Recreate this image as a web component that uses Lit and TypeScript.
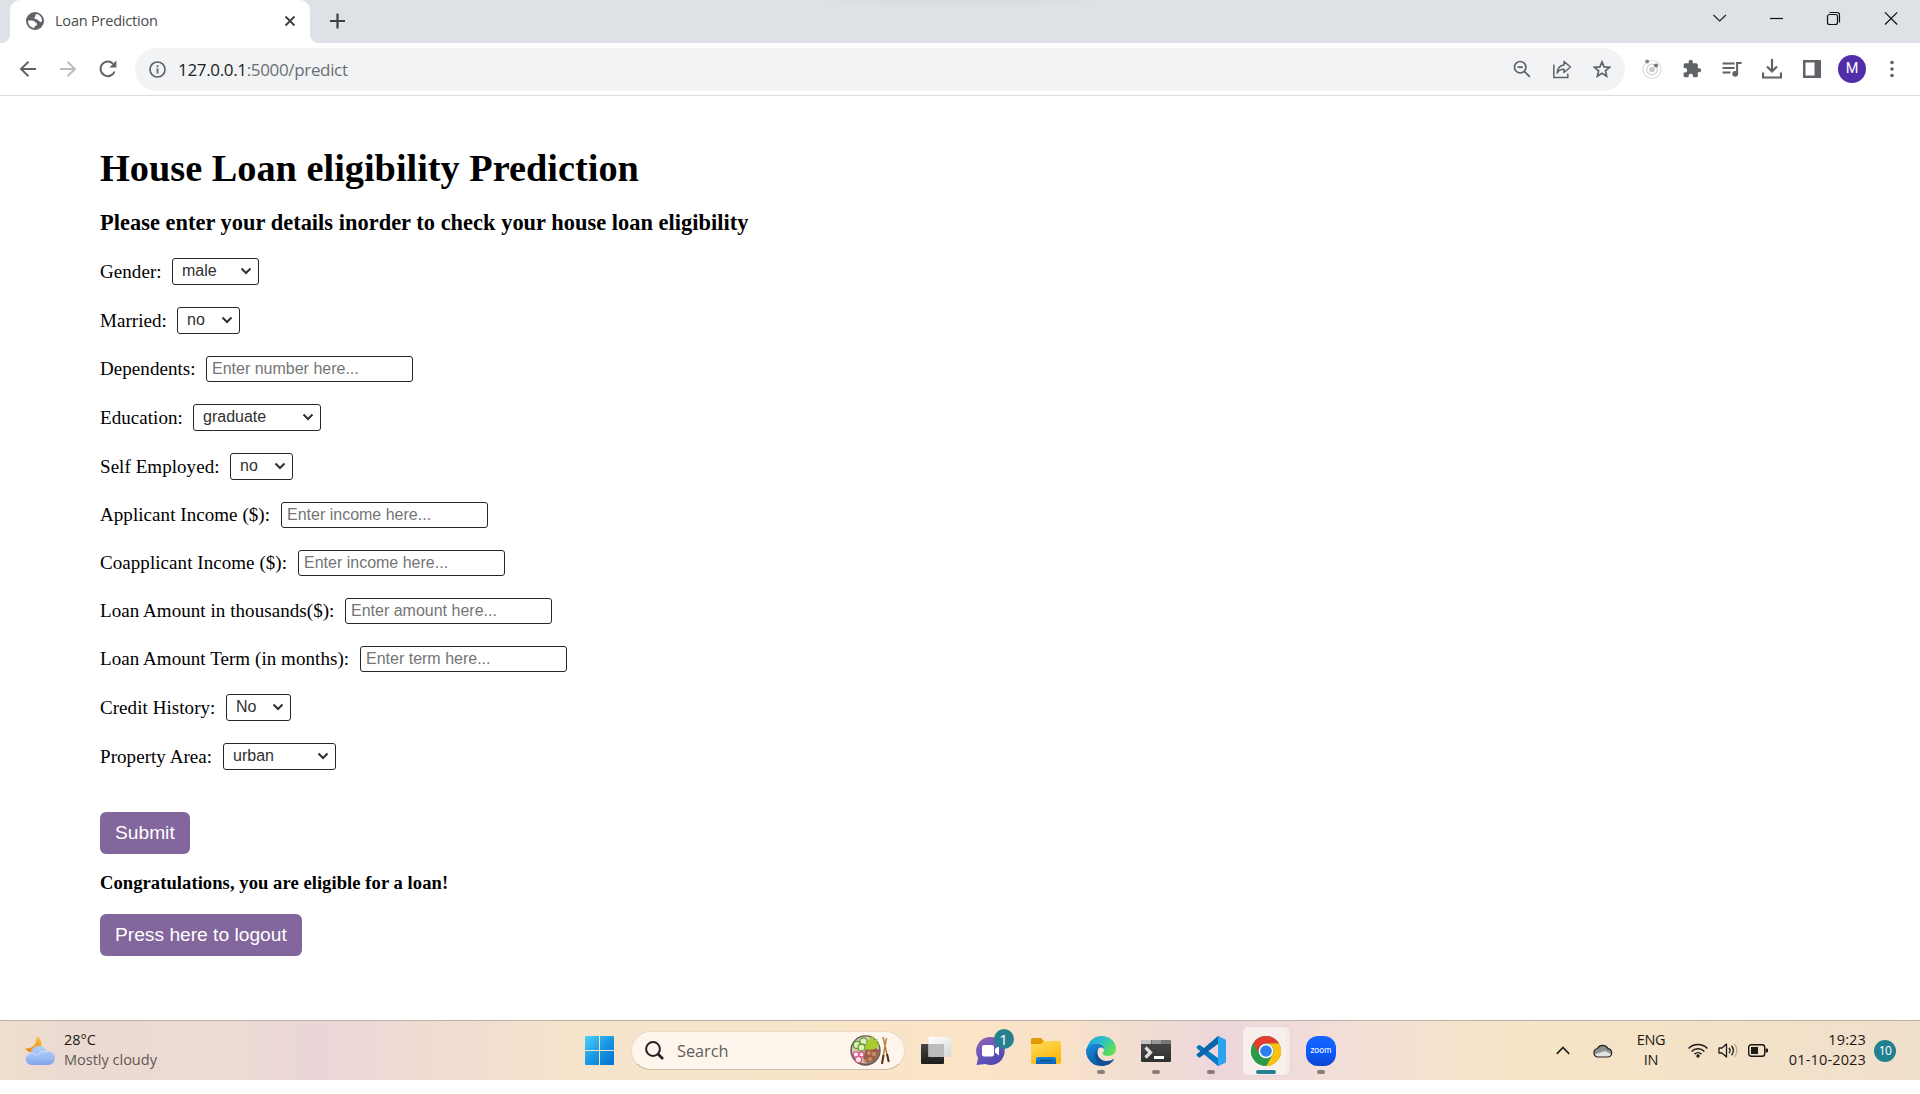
import { LitElement, html, css, svg } from "lit";
import { customElement, property } from "lit/decorators.js";

interface Field {
  label: string;
  kind: "select" | "input";
  value: string;
  labelWidth: number;
  width: number;
}

const FIELDS: Field[] = [
  { label: "Gender:", kind: "select", value: "male", labelWidth: 72, width: 87 },
  { label: "Married:", kind: "select", value: "no", labelWidth: 77, width: 63 },
  { label: "Dependents:", kind: "input", value: "Enter number here...", labelWidth: 106, width: 207 },
  { label: "Education:", kind: "select", value: "graduate", labelWidth: 93, width: 128 },
  { label: "Self Employed:", kind: "select", value: "no", labelWidth: 130, width: 63 },
  { label: "Applicant Income ($):", kind: "input", value: "Enter income here...", labelWidth: 181, width: 207 },
  { label: "Coapplicant Income ($):", kind: "input", value: "Enter income here...", labelWidth: 198, width: 207 },
  { label: "Loan Amount in thousands($):", kind: "input", value: "Enter amount here...", labelWidth: 245, width: 207 },
  { label: "Loan Amount Term (in months):", kind: "input", value: "Enter term here...", labelWidth: 260, width: 207 },
  { label: "Credit History:", kind: "select", value: "No", labelWidth: 126, width: 65 },
  { label: "Property Area:", kind: "select", value: "urban", labelWidth: 123, width: 113 },
];

@customElement("browser-chrome")
export class BrowserChrome extends LitElement {
  static styles = css`
    :host { display: block; font-family: "Open Sans", "Noto Sans", sans-serif; }
    svg { display: block; }
    .tabs {
      height: 43px; display: flex; align-items: flex-start; padding-left: 2px;
      background: radial-gradient(ellipse 150px 8px at 960px 0, #d8dbe0 0, #dadde2 60%, #dee1e6 100%) #dee1e6;
    }
    .curve { width: 8px; height: 43px; }
    .curve.l { background: radial-gradient(circle at 0 0, transparent 7.5px, #fff 8px) 0 35px / 8px 8px no-repeat; }
    .curve.r { background: radial-gradient(circle at 100% 0, transparent 7.5px, #fff 8px) 0 35px / 8px 8px no-repeat; }
    .tab {
      width: 300px; height: 43px; box-sizing: border-box; background: #fff;
      border-radius: 10px 10px 0 0; display: flex; align-items: center;
      padding: 0 14px 2px 16px;
    }
    .title { flex: 1; margin-left: 11px; font-size: 14.5px; letter-spacing: -0.2px; color: #45494d; white-space: nowrap; }
    .plus { margin: 12px 0 0 10px; }
    .window { margin-left: auto; display: flex; height: 36px; align-items: center; }
    .window svg { width: 57.3px; height: 16px; }
    .toolbar { height: 52px; display: flex; align-items: center; border-bottom: 1px solid #dadce0; background: #fff; padding-left: 7.5px; }
    .nav { width: 40px; display: flex; justify-content: center; flex: none; }
    .omni {
      width: 1490px; height: 43px; border-radius: 22px; background: #f1f3f4; margin-left: 7.5px;
      display: flex; align-items: center; box-sizing: border-box; padding: 0 3px 0 14px;
    }
    .url { flex: 1; margin-left: 12px; font-size: 17px; letter-spacing: -0.34px; color: #6b6f73; white-space: nowrap; }
    .host { color: #202124; }
    .ext { display: flex; margin-left: 7px; align-items: center; }
    .avatar { width: 28px; height: 28px; border-radius: 50%; background: #512da8; color: #fff; font: 14.5px/28px Roboto, sans-serif; text-align: center; }
  `;

  render() {
    return html`
      <div class="tabs">
        <div class="curve l"></div>
        <div class="tab">
          <svg width="18" height="18" viewBox="0 0 18 18">
            <circle cx="9" cy="9" r="9" fill="#5f6368" />
            <path d="M10 2C13.200 2.200 16 5 16 9l-1.200 1.200-2.300-1.400c-.6-1.600-1.700-1.700-3.200-1.900C8 6.600 8 5.200 9.200 4.600z" fill="#fff" />
            <path d="M2 8.500h3.800c2.200 0 3 .7 3.500 2 1.500.2 1.900.9 1.700 2-.2 1-.9 1.400-2.200 1.500L8.300 16C4.800 15.800 2 12.800 2 8.500z" fill="#fff" />
          </svg>
          <span class="title">Loan Prediction</span>
          <svg width="12" height="12" viewBox="0 0 12 12"><path d="M1.500 1.500l9 9M10.500 1.500l-9 9" stroke="#3c4043" stroke-width="1.800" /></svg>
        </div>
        <div class="curve r"></div>
        <svg class="plus" width="18" height="18" viewBox="0 0 18 18"><path d="M9.500 1.500v15M2 9h15" stroke="#3c4043" stroke-width="2.200" /></svg>
        <div class="window">
          <svg viewBox="0 0 57.3 16"><path d="M22.500 5l6.200 6 6.200-6" fill="none" stroke="#222" stroke-width="1.200" /></svg>
          <svg viewBox="0 0 57.3 16"><path d="M22 8.500h13" stroke="#111" stroke-width="1.200" /></svg>
          <svg viewBox="0 0 57.3 16">
            <rect x="22.500" y="4.500" width="10" height="10" rx="2" fill="none" stroke="#111" stroke-width="1.200" />
            <path d="M24.500 2.500h7.500a2.500 2.500 0 0 1 2.500 2.500v7.500" fill="none" stroke="#111" stroke-width="1.200" />
          </svg>
          <svg viewBox="0 0 57.3 16"><path d="M22 2.300l12.200 12.200M34.200 2.300L22 14.500" stroke="#111" stroke-width="1.200" /></svg>
        </div>
      </div>
      <div class="toolbar">
        <div class="nav"><svg width="18" height="18" viewBox="0 0 18 18"><path d="M17 9H2M9.500 1.700L2 9l7.500 7.300" fill="none" stroke="#5f6368" stroke-width="1.900" /></svg></div>
        <div class="nav"><svg width="18" height="18" viewBox="0 0 18 18"><path d="M1 9h15M8.500 1.700L16 9l-7.500 7.300" fill="none" stroke="#babcbe" stroke-width="1.900" /></svg></div>
        <div class="nav"><svg width="20" height="20" viewBox="0 0 20 20"><path d="M16.600 12.500A7.300 7.300 0 1 1 15 4.700" fill="none" stroke="#5f6368" stroke-width="2" /><path d="M18.400 1.500v7h-7z" fill="#5f6368" /></svg></div>
        <div class="omni">
          <svg width="17" height="17" viewBox="0 0 17 17"><circle cx="8.500" cy="8.500" r="7.500" fill="none" stroke="#5f6368" stroke-width="1.700" /><path d="M8.500 7.600v5M8.500 4.200v2" stroke="#5f6368" stroke-width="1.800" /></svg>
          <span class="url"><span class="host">127.0.0.1</span>:5000/predict</span>
          <div class="nav"><svg width="18" height="18" viewBox="0 0 18 18"><circle cx="7.200" cy="7.200" r="5.700" fill="none" stroke="#5f6368" stroke-width="1.700" /><path d="M4.500 7.200h5.400M11.300 11.300l5.500 5.500" stroke="#5f6368" stroke-width="1.800" /></svg></div>
          <div class="nav"><svg width="20" height="20" viewBox="0 0 20 20"><path d="M1.800 5.500v13h14v-4" fill="none" stroke="#5f6368" stroke-width="1.500" /><path d="M12 2.500l6.500 5.500-6.500 5.500v-3.200c-3.500 0-5.500 1.200-7 3.700.5-4.500 2.800-7.500 7-8z" fill="none" stroke="#5f6368" stroke-width="1.500" stroke-linejoin="round" /></svg></div>
          <div class="nav"><svg width="18" height="18" viewBox="0 0 18 18"><path d="M9 1.900l2.100 5 5.400.45-4.100 3.550 1.250 5.300L9 13.350 4.350 16.200 5.600 10.900 1.500 7.350l5.400-.45z" fill="none" stroke="#5f6368" stroke-width="1.700" /></svg></div>
        </div>
        <div class="ext">
          <div class="nav"><svg width="20" height="22" viewBox="0 0 20 22">
            <circle cx="10" cy="11.500" r="9" fill="none" stroke="#dcdcdc" stroke-width="1.200" /><circle cx="10" cy="11.500" r="5.300" fill="none" stroke="#d2d2d2" stroke-width="1.200" />
            <circle cx="10" cy="11.500" r="2.800" fill="#c8c8c8" /><circle cx="5.200" cy="3.500" r="2" fill="#858585" /><circle cx="14" cy="7.500" r="2.100" fill="#777" />
          </svg></div>
          <div class="nav"><svg width="20" height="20" viewBox="0 0 24 24"><path fill="#5f6368" d="M20.500 11H19V7c0-1.100-.9-2-2-2h-4V3.500a2.500 2.500 0 0 0-5 0V5H4c-1.100 0-2 .9-2 2v3.800h1.500a2.700 2.700 0 0 1 0 5.400H2V20c0 1.100.9 2 2 2h3.800v-1.500a2.700 2.700 0 0 1 5.400 0V22H17c1.100 0 2-.9 2-2v-4h1.500a2.500 2.500 0 0 0 0-5z" /></svg></div>
          <div class="nav"><svg width="20" height="17" viewBox="0 0 20 17"><path d="M.5 2.500h12M.5 7h12M.5 11.500h8" stroke="#5f6368" stroke-width="2" /><circle cx="13.200" cy="12.800" r="2.900" fill="#5f6368" /><path d="M15.100 13V2h4.500" fill="none" stroke="#5f6368" stroke-width="2" /></svg></div>
          <div class="nav"><svg width="20" height="20" viewBox="0 0 20 20"><path d="M10 0v11.500M5 7.500l5 5 5-5" fill="none" stroke="#5f6368" stroke-width="2.200" /><path d="M1 13.500v5h18v-5" fill="none" stroke="#5f6368" stroke-width="2.200" /></svg></div>
          <div class="nav"><svg width="18" height="18" viewBox="0 0 18 18"><path d="M0 0h18v18H0zM2.500 2.500v13h9v-13z" fill="#5f6368" fill-rule="evenodd" /></svg></div>
          <div class="nav"><div class="avatar">M</div></div>
          <div class="nav"><svg width="4" height="18" viewBox="0 0 4 18"><g fill="#5f6368"><circle cx="2" cy="2.500" r="1.800" /><circle cx="2" cy="9" r="1.800" /><circle cx="2" cy="15.500" r="1.800" /></g></svg></div>
        </div>
      </div>
    `;
  }
}

@customElement("form-field")
export class FormField extends LitElement {
  static styles = css`
    :host { display: block; }
    .row { display: flex; align-items: center; font: 19px/21px "Liberation Serif", serif; letter-spacing: 0.06px; color: #000; }
    .label { white-space: nowrap; flex: none; }
    .label.input { padding-bottom: 1px; }
    .control {
      box-sizing: border-box; height: 27px; border: 1.250px solid #262626; border-radius: 3px; background: #fff;
      font: 16px/18px "Liberation Sans", sans-serif; margin: 0; color: #303030;
    }
    .wrap { display: grid; align-items: center; }
    .wrap > * { grid-area: 1 / 1; }
    select.control { appearance: none; width: 100%; padding: 0 0 1px 9px; }
    .arrow { justify-self: end; margin: 0 7px 1px 0; pointer-events: none; }
    input.control { height: 26px; padding: 0 0 1px 5px; outline: none; }
    input::placeholder { color: #757575; opacity: 1; }
  `;
  @property({ attribute: false }) field!: Field;

  render() {
    const f = this.field;
    return html`<div class="row">
      <label class="label ${f.kind}" style="width:${f.labelWidth}px">${f.label}</label>
      ${f.kind === "select"
        ? html`<div class="wrap" style="width:${f.width}px">
            <select class="control"><option>${f.value}</option></select>
            <svg class="arrow" width="12" height="8" viewBox="0 0 12 8"><path d="M1.500 1.500L6 6l4.500-4.500" fill="none" stroke="#303030" stroke-width="2" /></svg>
          </div>`
        : html`<input class="control" style="width:${f.width}px" placeholder=${f.value} />`}
    </div>`;
  }
}

@customElement("loan-page")
export class LoanPage extends LitElement {
  static styles = css`
    :host { display: block; height: 924px; box-sizing: border-box; padding: 50px 100px 0; font-family: "Liberation Serif", serif; color: #000; background: #fff; }
    h1, h3, h4 { margin: 0; white-space: nowrap; }
    h1 { font-size: 38.320px; line-height: 44px; }
    h3 { font-size: 22.400px; line-height: 26px; margin-top: 20px; letter-spacing: 0.03px; }
    h4 { font-size: 18.600px; line-height: 22px; margin: 18px 0 20px; letter-spacing: 0.05px; }
    .form { display: flex; flex-direction: column; gap: 22px; margin-top: 22px; margin-bottom: 42px; }
    .form form-field:nth-child(3) { margin-top: 0; }
    .btn {
      display: block; height: 42px; border: 0; border-radius: 6px; background: #82669c; color: #fff;
      font: 19.200px "Liberation Sans", sans-serif; padding: 0 15px;
    }
  `;
  render() {
    return html`
      <h1>House Loan eligibility Prediction</h1>
      <h3>Please enter your details inorder to check your house loan eligibility</h3>
      <div class="form">${FIELDS.map((f) => html`<form-field .field=${f}></form-field>`)}</div>
      <button class="btn">Submit</button>
      <h4>Congratulations, you are eligible for a loan!</h4>
      <button class="btn">Press here to logout</button>
    `;
  }
}

const taskIcons = {
  taskview: svg`
    <linearGradient id="tv1" x2="0" y2="1"><stop stop-color="#454545" /><stop offset="1" stop-color="#1c1c1c" /></linearGradient>
    <linearGradient id="tv2" x2="0.700" y2="1"><stop stop-color="#fff" /><stop offset="1" stop-color="#dcdcdc" /></linearGradient>
    <rect x="0" y="8" width="23" height="20" rx="1" fill="url(#tv1)" /><rect x="7.500" y="1" width="22.500" height="20" rx="1" fill="url(#tv2)" />
    <rect x="7.500" y="8" width="15.500" height="13" fill="#bcbcbc" />`,
  chat: svg`
    <linearGradient id="ch1" x2="0.600" y2="1"><stop stop-color="#9a5fa8" /><stop offset="0.500" stop-color="#6a5ac0" /><stop offset="1" stop-color="#5048ae" /></linearGradient>
    <path d="M14.500 1a14 14 0 1 1-5 27L.5 29l1.600-7A14 14 0 0 1 14.500 1z" fill="url(#ch1)" />
    <rect x="6" y="9" width="12" height="11.500" rx="2" fill="#fff" /><path d="M19 13l4-3v9.500l-4-3z" fill="#fff" />`,
  folder: svg`
    <linearGradient id="fo1" x2="0.500" y2="1"><stop stop-color="#ffdc5e" /><stop offset="1" stop-color="#fbb90d" /></linearGradient>
    <linearGradient id="fo2" x2="0" y2="1"><stop stop-color="#1383d8" /><stop offset="1" stop-color="#0c63b5" /></linearGradient>
    <path d="M0 3.500A1.500 1.500 0 0 1 1.500 2H10l3 3v3H0z" fill="#e09a05" />
    <path d="M0 8h10l3-3h15.500A1.500 1.500 0 0 1 30 6.500V26a2 2 0 0 1-2 2H2a2 2 0 0 1-2-2z" fill="url(#fo1)" />
    <path d="M5 28v-5a2 2 0 0 1 2-2h16a2 2 0 0 1 2 2v5z" fill="url(#fo2)" /><path d="M9 24.500h12" stroke="#0a4a8c" stroke-width="1.300" />`,
  edge: svg`
    <linearGradient id="ed1" x1="0" x2="1" y2="0.600"><stop stop-color="#1f9fe0" /><stop offset="0.500" stop-color="#2bc0c8" /><stop offset="1" stop-color="#5fe052" /></linearGradient>
    <linearGradient id="ed2" x2="0.500" y2="1"><stop stop-color="#1a8fe0" /><stop offset="1" stop-color="#0c59a4" /></linearGradient>
    <path d="M1 13C2 5.500 8 0 15.500 0 24 0 30 6 30 12.500c0 4.500-3.500 7.500-7.500 7.500-4 0-6-1.300-6-2.500 0-.9 1.700-1.500 1.700-4 0-3-3-6-7.700-6C6 7.500 2 10 1 13z" fill="url(#ed1)" />
    <path d="M0 14.500C.5 10 5 7.600 10 7.600c5 0 8.200 2.600 8.200 5.800-1-1.900-3-2.400-4.700-1.700-5.500 3-5 13.300 4.500 18A15 15 0 0 1 0 14.500z" fill="url(#ed2)" />
    <path d="M12.500 12.500c-3 5 .5 12.500 8 12.500 3 0 5-.7 6.600-1.700.6-.3 1 .2.7.7A14.500 14.500 0 0 1 17.500 30C8 27 7 16.500 12.500 12.500z" fill="#124f94" />`,
  terminal: svg`
    <linearGradient id="te1" x2="0" y2="1"><stop stop-color="#4a4a4a" /><stop offset="1" stop-color="#303030" /></linearGradient>
    <rect y="4" width="30" height="22" rx="1.500" fill="url(#te1)" /><path d="M1.500 4H10v4H0V5.500A1.500 1.500 0 0 1 1.500 4z" fill="#c4c4c4" /><path d="M10.500 4H20v4h-9.500z" fill="#999" /><path d="M20 4h8.500A1.500 1.500 0 0 1 30 5.500V8H20z" fill="#777" />
    <path d="M4.500 11.500l5 5-5 5" fill="none" stroke="#ddd" stroke-width="3.200" /><rect x="13" y="20" width="10" height="3" fill="#fff" />`,
  vscode: svg`
    <path d="M22 0l2 1v28l-2 1L1 12.500a1.300 1.300 0 0 1 0-2L2.600 9.200a1.300 1.300 0 0 1 1.600 0L22 22z" fill="#0878c2" />
    <path d="M22 0v8L4.200 21.300a1.300 1.300 0 0 1-1.600 0L1 19.900a1.300 1.300 0 0 1 0-2z" fill="#0a66ab" />
    <path d="M22 0l7 3.200a1.700 1.700 0 0 1 1 1.600v20.600a1.700 1.700 0 0 1-1 1.600l-7 3z" fill="#2ba4f0" />`,
  chrome: svg`
    <circle cx="15" cy="15" r="15" fill="#34a853" />
    <path d="M2 7.500A15 15 0 0 1 28 7.500H15a7.500 7.500 0 0 0-6.500 11.300z" fill="#e33b2e" />
    <path d="M28 7.500A15 15 0 0 1 15 30l6.500-11.200A7.500 7.500 0 0 0 15 7.500z" fill="#fcc110" />
    <path d="M2 7.500l6.500 11.300A7.500 7.500 0 0 0 21.500 18.800L15 30A15 15 0 0 1 2 7.500z" fill="#2a9c48" />
    <circle cx="15" cy="15" r="7.300" fill="#fff" /><circle cx="15" cy="15" r="5.800" fill="#2f7def" />`,
  zoom: svg`
    <linearGradient id="zo1" x2="0" y2="1"><stop stop-color="#1764ff" /><stop offset="0.500" stop-color="#0b5cff" /><stop offset="1" stop-color="#0a44d0" /></linearGradient>
    <rect width="30" height="30" rx="12" fill="url(#zo1)" />
    <text x="15" y="17.200" text-anchor="middle" textLength="21" lengthAdjust="spacingAndGlyphs" font-family="Lato, sans-serif" font-size="8.500" fill="#fff">zoom</text>`,
};

@customElement("task-bar")
export class TaskBar extends LitElement {
  static styles = css`
    :host {
      display: flex; height: 60px; box-sizing: border-box; border-top: 1px solid #bcafa6; align-items: center;
      font-family: "Open Sans", "Noto Sans", sans-serif; color: #1b1a19;
      background: linear-gradient(90deg, #f0dfcb 0, #ecdad2 60px, #ecdad3 240px, #ebd5d8 320px, #f0dbd3 420px, #f5e3cc 560px, #f8e4c8 800px, #fbe4c6 960px, #f8e2c9 1060px, #f1dcd3 1150px, #edd6db 1220px, #f3dfd8 1350px, #f6e2cc 1450px, #f8e4c6 1530px, #f4e2c8 1700px, #f0dfcb 1920px);
    }
    svg { display: block; overflow: visible; flex: none; }
    .weather { display: flex; align-items: center; width: 561px; padding-left: 24px; flex: none; }
    .lines { font-size: 14.500px; line-height: 20px; margin-left: 9px; white-space: nowrap; padding-bottom: 2px; }
    .dim { color: #5d5753; }
    .search {
      width: 274px; height: 39px; box-sizing: border-box; margin: 0 3.500px 0 17px; border-radius: 20px; background: #fef6ec; border: 1px solid #eadccb; border-bottom-color: #cbbba8;
      display: flex; align-items: center; padding: 0 13px 0 13px; flex: none;
    }
    .search span { flex: 1; font-size: 16.300px; color: #625d58; margin-left: 13px; }
    .app { width: 55px; height: 59px; flex: none; display: grid; place-items: center; }
    .app > * { grid-area: 1 / 1; }
    .run { align-self: end; width: 8px; height: 4px; border-radius: 2px; background: #8a7d7a; margin-bottom: 6px; }
    .run.on { width: 20px; background: #27808f; }
    .tile { width: 43px; height: 48px; border-radius: 5px; background: #f8eeec; box-shadow: 4px 0 0 -0px #f6e9e8, 4.500px 0 0 0.500px #e4d2d2; justify-self: start; margin-left: 4px; }
    .count { align-self: start; justify-self: end; width: 20px; height: 20px; border-radius: 50%; background: #27808f; color: #fff; font: 15px/20px "Open Sans", sans-serif; text-align: center; margin: 8px 5px 0 0; }
    .tray { margin-left: auto; display: flex; align-items: center; padding-right: 24px; }
    .cell { display: flex; justify-content: center; flex: none; }
    .cloud { margin-left: 23px; }
    .lang { text-align: center; font-size: 14.500px; line-height: 20px; width: 40px; letter-spacing: -0.300px; margin-left: 18px; padding-bottom: 1px; }
    .wifi { margin-left: 17px; }
    .gap { margin-left: 10px; }
    .clock { text-align: right; font-size: 14.500px; line-height: 20px; width: 90px; white-space: nowrap; letter-spacing: 0.150px; margin-left: 8px; padding-bottom: 2px; }
    .bell { width: 22px; height: 22px; border-radius: 50%; background: #22818f; color: #fff; font-size: 12px; line-height: 21px; text-align: center; margin-left: 8px; letter-spacing: -0.500px; }
  `;

  private app(icon: unknown, extra: unknown = "", before: unknown = "") {
    return html`<div class="app">${before}<svg width="30" height="30" viewBox="0 0 30 30">${icon}</svg>${extra}</div>`;
  }

  render() {
    const dot = html`<i class="run"></i>`;
    return html`
      <div class="weather">
        <svg width="31" height="30" viewBox="0 0 31 30">
          <linearGradient id="cl" x2="0" y2="1"><stop stop-color="#b4cdf8" /><stop offset="0.600" stop-color="#9dbdf3" /><stop offset="1" stop-color="#7fa3e8" /></linearGradient>
          <linearGradient id="mo" x2="0" y2="1"><stop stop-color="#f9c544" /><stop offset="1" stop-color="#ee8512" /></linearGradient>
          <path d="M12.500 0c5 2.500 6.500 9 3 13.500C11.500 18 4 17.500 1 12.500 8.500 13 13 8 12.500 0z" fill="url(#mo)" />
          <path d="M7.500 29a6.200 6.200 0 0 1-.8-12.300A8.500 8.500 0 0 1 23 15.500a6.800 6.800 0 1 1 1 13.500z" fill="url(#cl)" />
          <path d="M2.500 20c3-3.500 8-3.500 11 .5M14 19c2.500-3.500 6.500-4 9.500-3" fill="none" stroke="#d5e3fc" stroke-width="1.200" opacity="0.800" />
        </svg>
        <div class="lines"><div>28°C</div><div class="dim">Mostly cloudy</div></div>
      </div>
      <svg width="29" height="29" viewBox="0 0 29 29">
        <linearGradient id="wn" gradientUnits="userSpaceOnUse" x1="0" y1="0" x2="29" y2="29"><stop stop-color="#4fd0fa" /><stop offset="0.500" stop-color="#1a98e4" /><stop offset="1" stop-color="#0070cf" /></linearGradient>
        <path d="M0 1a1 1 0 0 1 1-1h13v14H0zM15 0h13a1 1 0 0 1 1 1v13H15zM0 15h14v14H1a1 1 0 0 1-1-1zM15 15h14v13a1 1 0 0 1-1 1H15z" fill="url(#wn)" />
      </svg>
      <div class="search">
        <svg width="19" height="19" viewBox="0 0 19 19"><circle cx="8" cy="8" r="6.900" fill="none" stroke="#222" stroke-width="2" /><path d="M13 13l5 5" stroke="#222" stroke-width="2.600" /></svg>
        <span>Search</span>
        <svg width="41" height="31" viewBox="0 0 41 31">
          <circle cx="15.500" cy="15.500" r="15.200" fill="#6b5c52" /><circle cx="15.500" cy="15" r="13.600" fill="#d9cbb5" />
          <path d="M15 15l8-4 6 4a13 13 0 0 1-13 13l-3-5z" fill="#9c5f45" />
          <g fill="#c98e6e"><circle cx="19" cy="18" r="2" /><circle cx="24" cy="19" r="2.200" /><circle cx="20" cy="24" r="2" /><circle cx="15" cy="26" r="1.800" /></g>
          <g fill="#dff0b8" stroke="#5c9a36" stroke-width="1.300"><circle cx="7" cy="10" r="3.700" /><circle cx="13.500" cy="6.500" r="3.700" /><circle cx="11.500" cy="12.500" r="3.500" /></g>
          <path d="M15 14c1-6 5-12 9-13l-1 4 5-1-2 4 4 1c-3 5-8 7-15 5z" fill="#a5cd2c" />
          <g fill="#fbe6ee" stroke="#dc5a8e" stroke-width="1.300"><circle cx="6" cy="19.500" r="2.800" /><circle cx="11.500" cy="19.500" r="2.500" /><circle cx="8.500" cy="24.500" r="3.200" /></g>
          <path d="M33 2l5.500 24M36.500 3L32 28" stroke="#b5804a" stroke-width="1.500" /><path d="M37 19l1.800 8M33.500 20L32 29" stroke="#56351f" stroke-width="2" />
        </svg>
      </div>
      ${this.app(taskIcons.taskview)}
      ${this.app(taskIcons.chat, html`<span class="count">1</span>`)}
      ${this.app(taskIcons.folder)}
      ${this.app(taskIcons.edge, dot)}
      ${this.app(taskIcons.terminal, dot)}
      ${this.app(taskIcons.vscode, dot)}
      ${this.app(taskIcons.chrome, html`<i class="run on"></i>`, html`<i class="tile"></i>`)}
      ${this.app(taskIcons.zoom, dot)}
      <div class="tray">
        <div class="cell"><svg width="14" height="9" viewBox="0 0 14 9"><path d="M.8 7.800L7 1.500l6.200 6.300" fill="none" stroke="#222" stroke-width="1.700" /></svg></div>
        <div class="cell cloud"><svg width="20" height="14" viewBox="0 0 20 14">
          <path d="M5 13a4.300 4.300 0 0 1-.6-8.500A6 6 0 0 1 15 4.600 4.300 4.300 0 0 1 15.500 13z" fill="#909090" />
          <path d="M1 10.500L12 7l7 3.500a4 4 0 0 1-3.500 2.500H5a4 4 0 0 1-4-2.500z" fill="#e2e2e2" />
          <path d="M5 13a4.300 4.300 0 0 1-.6-8.500A6 6 0 0 1 15 4.600 4.300 4.300 0 0 1 15.500 13z" fill="none" stroke="#222" stroke-width="1.200" />
        </svg></div>
        <div class="lang">ENG<br />IN</div>
        <svg class="wifi" width="20" height="15" viewBox="0 0 20 15"><g fill="none" stroke="#1b1a19" stroke-width="1.500"><path d="M.6 5.500a13.300 13.300 0 0 1 18.800 0M3.600 8.500a9 9 0 0 1 12.800 0M6.500 11.200a5 5 0 0 1 7 0" /></g><circle cx="10" cy="13" r="1.700" fill="#1b1a19" /></svg>
        <svg class="gap" width="20" height="15" viewBox="0 0 20 15"><path d="M1 5h3l4.500-4v13L4 10H1z" fill="none" stroke="#1b1a19" stroke-width="1.300" stroke-linejoin="round" /><path d="M11 5a3.800 3.800 0 0 1 0 5M13.500 2.800a7 7 0 0 1 0 9.400" fill="none" stroke="#1b1a19" stroke-width="1.300" /><path d="M16.300.8a10 10 0 0 1 0 13.400" fill="none" stroke="#b5a998" stroke-width="1.200" /></svg>
        <svg class="gap" width="20" height="13" viewBox="0 0 20 13"><rect x=".7" y=".7" width="16" height="11.600" rx="2.500" fill="none" stroke="#1b1a19" stroke-width="1.400" /><rect x="3" y="3" width="7" height="7" fill="#1b1a19" /><path d="M17.500 4.500H19a1 1 0 0 1 1 1v2a1 1 0 0 1-1 1h-1.500z" fill="#1b1a19" /></svg>
        <div class="clock"><div>19:23</div><div>01-10-2023</div></div>
        <div class="bell">10</div>
      </div>
    `;
  }
}

@customElement("app-root")
export class AppRoot extends LitElement {
  static styles = css`
    :host { display: block; width: 1920px; height: 1094px; background: #fff; overflow: hidden; }
  `;
  render() {
    return html`<browser-chrome></browser-chrome><loan-page></loan-page><task-bar></task-bar>`;
  }
}
